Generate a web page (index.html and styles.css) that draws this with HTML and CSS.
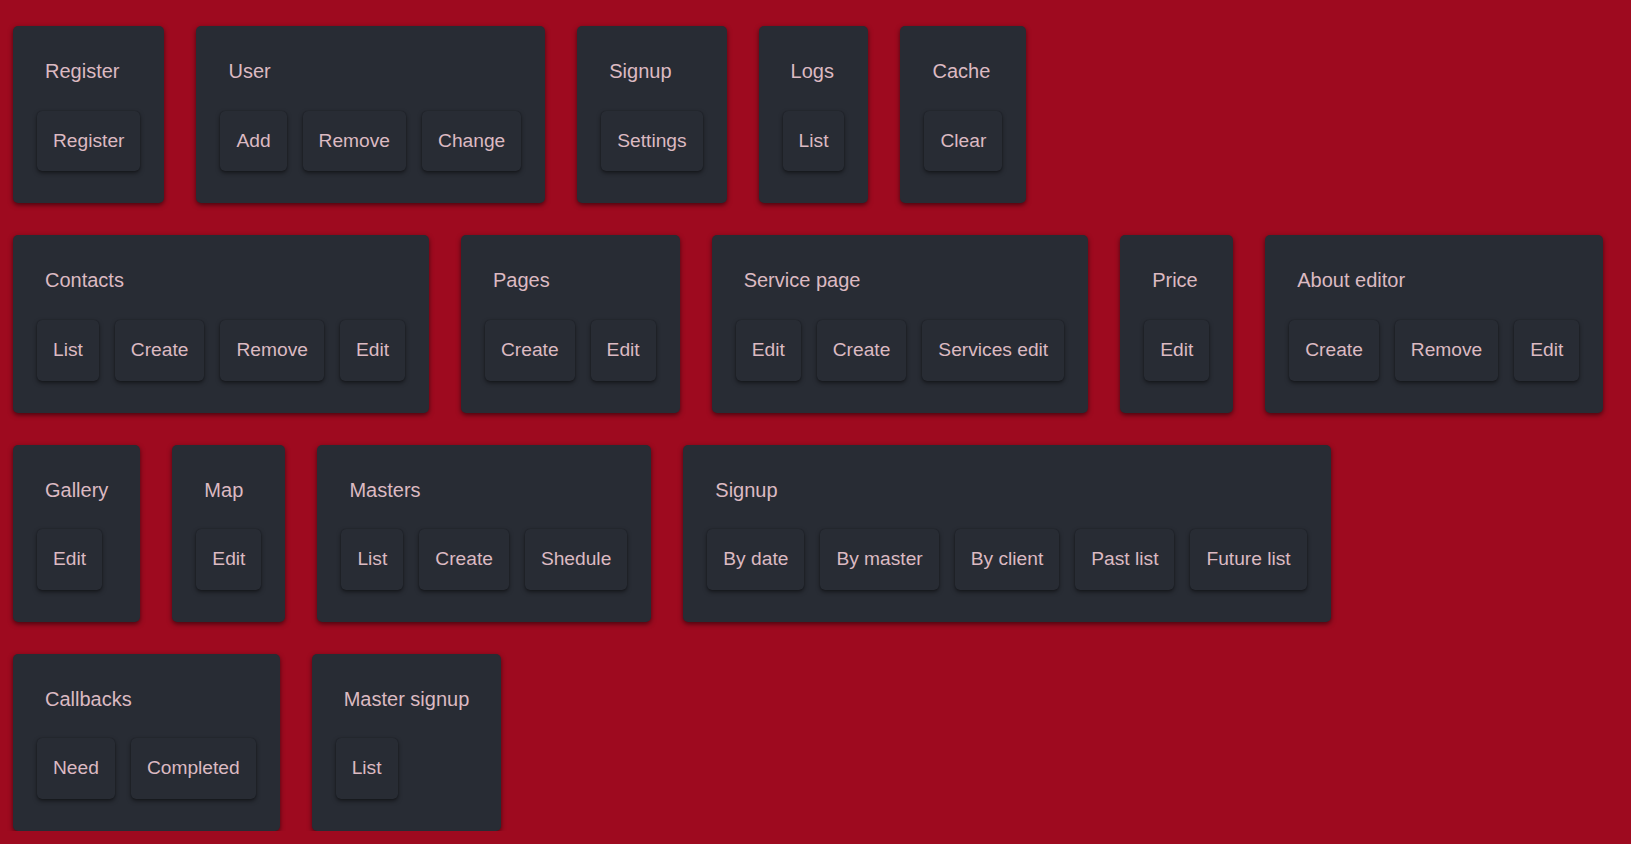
FILE: index.html
```html
<!DOCTYPE html>
<html lang="en">
<head>
<meta charset="utf-8">
<title>Admin</title>
<link rel="stylesheet" href="styles.css">
</head>
<body>
<main class="page">
  <div class="row">
    <section class="card"><h2 class="card-title">Register</h2><div class="actions"><button class="btn">Register</button></div></section>
    <section class="card"><h2 class="card-title">User</h2><div class="actions"><button class="btn">Add</button><button class="btn">Remove</button><button class="btn">Change</button></div></section>
    <section class="card"><h2 class="card-title">Signup</h2><div class="actions"><button class="btn">Settings</button></div></section>
    <section class="card"><h2 class="card-title">Logs</h2><div class="actions"><button class="btn">List</button></div></section>
    <section class="card"><h2 class="card-title">Cache</h2><div class="actions"><button class="btn">Clear</button></div></section>
  </div>
  <div class="row">
    <section class="card"><h2 class="card-title">Contacts</h2><div class="actions"><button class="btn">List</button><button class="btn">Create</button><button class="btn">Remove</button><button class="btn">Edit</button></div></section>
    <section class="card"><h2 class="card-title">Pages</h2><div class="actions"><button class="btn">Create</button><button class="btn">Edit</button></div></section>
    <section class="card"><h2 class="card-title">Service page</h2><div class="actions"><button class="btn">Edit</button><button class="btn">Create</button><button class="btn">Services edit</button></div></section>
    <section class="card"><h2 class="card-title">Price</h2><div class="actions"><button class="btn">Edit</button></div></section>
    <section class="card"><h2 class="card-title">About editor</h2><div class="actions"><button class="btn">Create</button><button class="btn">Remove</button><button class="btn">Edit</button></div></section>
  </div>
  <div class="row">
    <section class="card"><h2 class="card-title">Gallery</h2><div class="actions"><button class="btn">Edit</button></div></section>
    <section class="card"><h2 class="card-title">Map</h2><div class="actions"><button class="btn">Edit</button></div></section>
    <section class="card"><h2 class="card-title">Masters</h2><div class="actions"><button class="btn">List</button><button class="btn">Create</button><button class="btn">Shedule</button></div></section>
    <section class="card"><h2 class="card-title">Signup</h2><div class="actions"><button class="btn">By date</button><button class="btn">By master</button><button class="btn">By client</button><button class="btn">Past list</button><button class="btn">Future list</button></div></section>
  </div>
  <div class="row">
    <section class="card"><h2 class="card-title">Callbacks</h2><div class="actions"><button class="btn">Need</button><button class="btn">Completed</button></div></section>
    <section class="card"><h2 class="card-title">Master signup</h2><div class="actions"><button class="btn">List</button></div></section>
  </div>
</main>
</body>
</html>
```
FILE: styles.css
```css
html, body {
  margin: 0;
  padding: 0;
  background: #9e0a1f;
}
body {
  font-family: "Liberation Sans", Arial, sans-serif;
  font-size: 19.2px;
  line-height: 1.5;
  color: #dcbac2;
}
.page {
  padding: 26px 0 0 13px;
  display: flex;
  flex-direction: column;
  gap: 32px;
}
.row {
  display: flex;
  gap: 32px;
  align-items: flex-start;
}
.card {
  background: #282c34;
  border-radius: 5px;
  padding: 16px 16px 24px;
  box-shadow: 0 2px 5px rgba(0, 0, 0, 0.55);
  flex: 0 0 auto;
}
.card-title {
  margin: 0;
  padding: 14px 16px 16.5px;
  font-size: 20px;
  font-weight: normal;
  line-height: 30px;
}
.actions {
  display: flex;
}
.btn {
  margin: 8px;
  padding: 16px;
  font: inherit;
  color: inherit;
  background: #282c34;
  border: none;
  border-radius: 5px;
  box-shadow: 0 2px 4px rgba(0, 0, 0, 0.5), 0 0 1px rgba(0, 0, 0, 0.4);
  cursor: pointer;
  white-space: nowrap;
}
```
